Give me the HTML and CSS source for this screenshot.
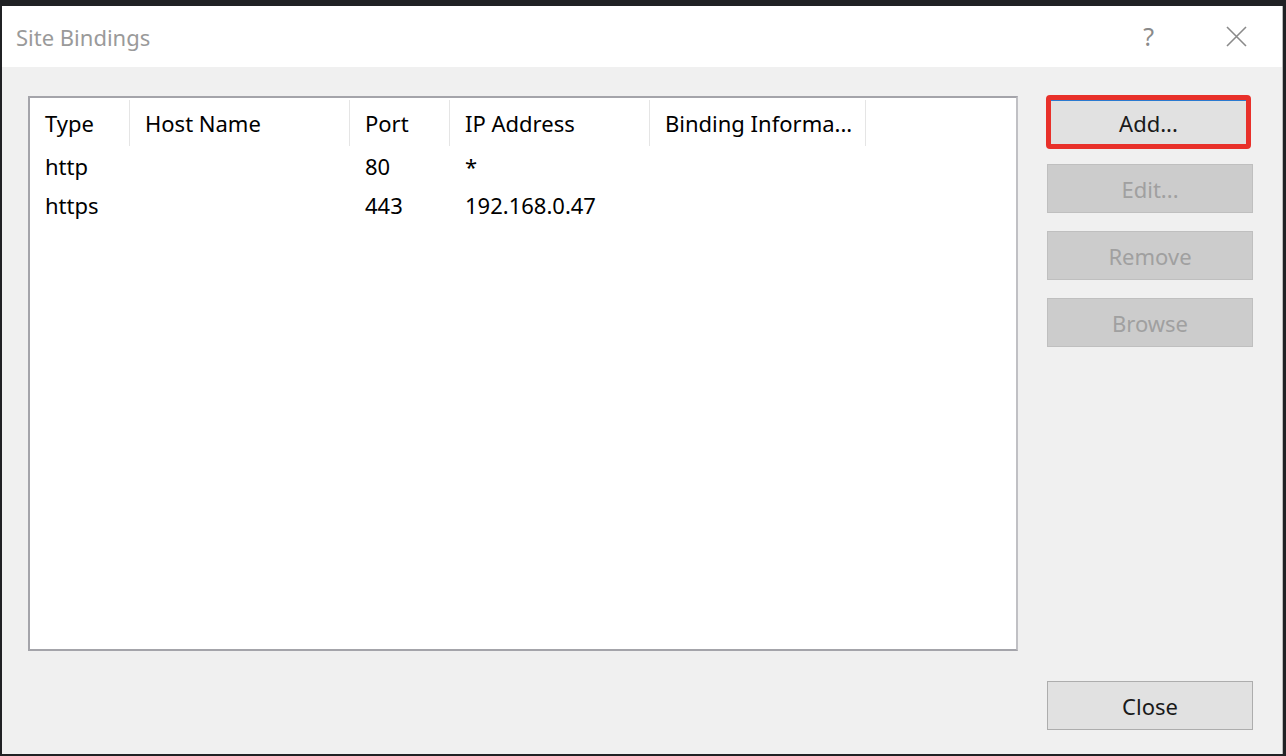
FILE: index.html
```html
<!DOCTYPE html>
<html lang="en">
<head>
  <meta charset="UTF-8">
  <meta name="viewport" content="width=device-width, initial-scale=1">
  <title>Site Bindings</title>
  <link rel="stylesheet" href="styles.css">
</head>
<body>
  <div class="window">
    <div class="titlebar">
      <span class="title">Site Bindings</span>
      <span class="help">?</span>
      <span class="close-x">
        <svg width="21" height="21" viewBox="0 0 21 21"><path d="M1 1 L20 20 M20 1 L1 20" stroke="#8a8a8a" stroke-width="1.6" fill="none"/></svg>
      </span>
    </div>

    <div class="content">
      <div class="listview">
        <div class="row header">
          <div class="col c-type">Type</div>
          <div class="col c-host">Host Name</div>
          <div class="col c-port">Port</div>
          <div class="col c-ip">IP Address</div>
          <div class="col c-info">Binding Informa...</div>
        </div>
        <div class="row">
          <div class="col c-type">http</div>
          <div class="col c-host"></div>
          <div class="col c-port">80</div>
          <div class="col c-ip">*</div>
          <div class="col c-info"></div>
        </div>
        <div class="row">
          <div class="col c-type">https</div>
          <div class="col c-host"></div>
          <div class="col c-port">443</div>
          <div class="col c-ip">192.168.0.47</div>
          <div class="col c-info"></div>
        </div>
      </div>

      <div class="side">
        <div class="buttons">
          <div class="highlight"><button class="btn default">Add...</button></div>
          <button class="btn" disabled>Edit...</button>
          <button class="btn" disabled>Remove</button>
          <button class="btn" disabled>Browse</button>
        </div>
        <button class="btn close-btn">Close</button>
      </div>
    </div>
  </div>
</body>
</html>
```

FILE: styles.css
```css
body {
  margin: 0;
  background-color: #202124;
  font-family: 'Noto Sans', 'Open Sans', Arial, sans-serif;
  overflow: hidden;
}
.window {
  margin: 6px 3px 0 2px;
  height: 748px;
  background-color: #f0f0f0;
  border-right: 1px solid #b9b9b9;
  display: flex;
  flex-direction: column;
}
.titlebar {
  height: 61px;
  background-color: #fff;
  display: flex;
  align-items: center;
  padding-left: 14px;
}
.title {
  flex: 1;
  font-size: 22px;
  color: #9a9a9a;
  margin-top: 1px;
}
.help {
  font-size: 25px;
  color: #8a8a8a;
  margin-right: 72px;
  margin-top: -2px;
}
.close-x {
  width: 21px;
  height: 21px;
  margin-right: 35px;
  margin-top: -1px;
}
.content {
  flex: 1;
  display: flex;
  padding: 29px 29px 24px 26px;
}
.listview {
  width: 986px;
  height: 551px;
  background-color: #fff;
  border: 2px solid #a4a4aa;
  border-right-color: #c0c0c4;
}
.row {
  display: flex;
  height: 39px;
  align-items: center;
  font-size: 22px;
  color: #000;
}
.row.header {
  height: 48px;
  align-items: flex-start;
}
.col {
  padding-left: 15px;
  box-sizing: border-box;
  white-space: nowrap;
}
.header .col {
  border-right: 1px solid #e5e5e5;
  height: 46px;
  line-height: 46px;
  margin-top: 2px;
}
.c-type { width: 100px; }
.c-host { width: 220px; }
.c-port { width: 100px; }
.c-ip { width: 200px; }
.c-info { width: 216px; }
.side {
  margin-left: 29px;
  display: flex;
  flex-direction: column;
  justify-content: space-between;
  width: 206px;
}
.buttons {
  display: flex;
  flex-direction: column;
  gap: 18px;
}
.highlight {
  border: 5px solid #e8302a;
  border-radius: 4px;
  margin: -1px 0 -3px -1px;
  width: 195px;
}
.btn {
  display: block;
  width: 206px;
  height: 49px;
  background-color: #e1e1e1;
  border: 1px solid #adadad;
  font-family: 'Noto Sans', 'Open Sans', Arial, sans-serif;
  font-size: 22px;
  color: #1a1a1a;
  padding: 0;
}
.btn.default {
  width: 195px;
  height: 44px;
  border: none;
  border-top: 1px solid #2a7ad0;
}
.btn:disabled {
  background-color: #cccccc;
  border-color: #bfbfbf;
  color: #a0a0a0;
}
```
